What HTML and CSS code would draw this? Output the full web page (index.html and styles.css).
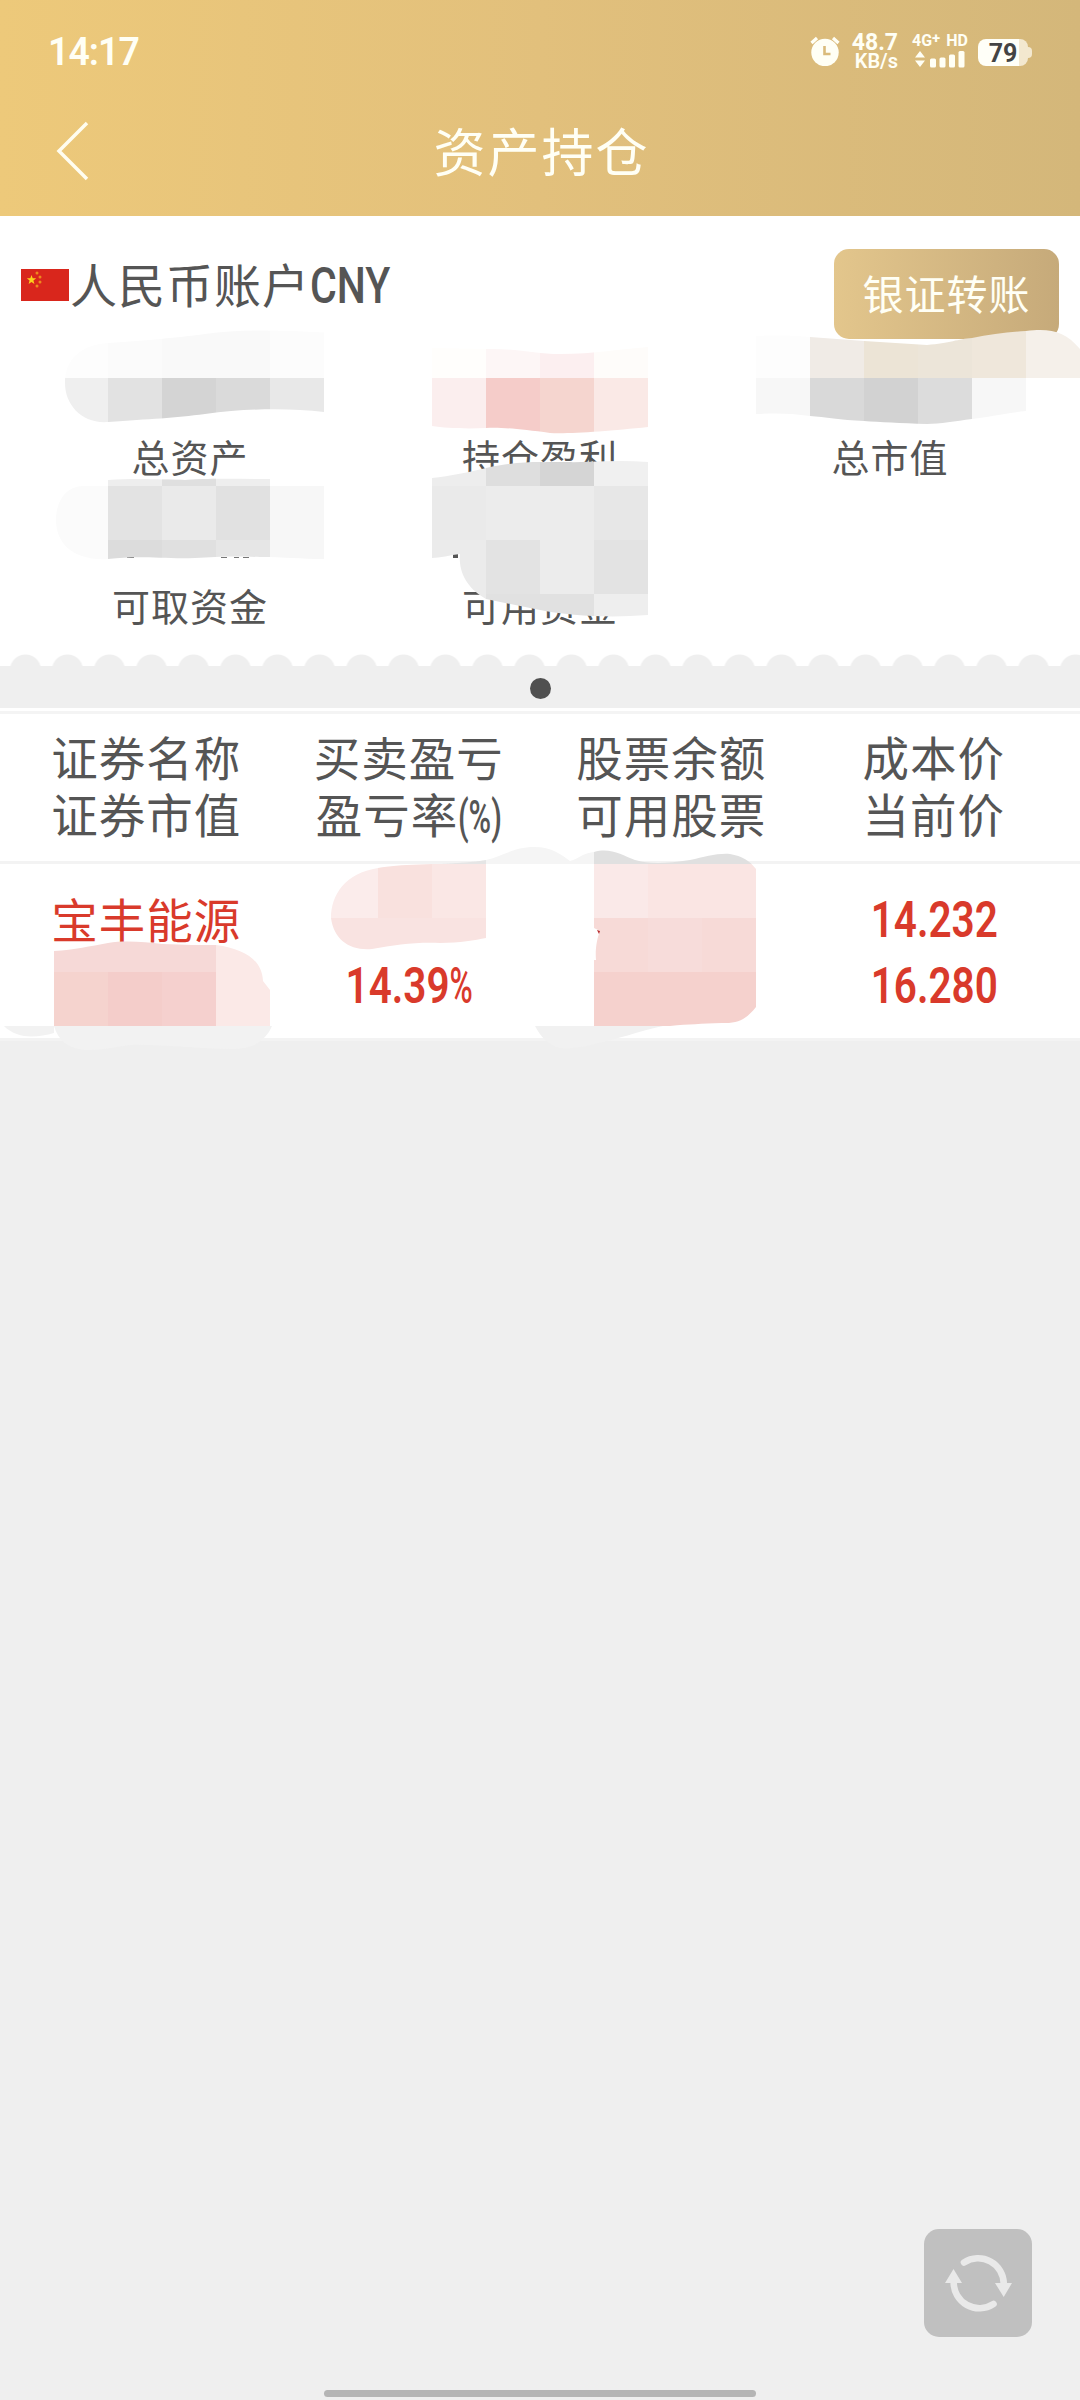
FILE: index.html
```html
<!DOCTYPE html>
<html lang="zh-CN">
<head>
    <meta charset="UTF-8">
    <title>资产持仓</title>
    <link rel="stylesheet" href="styles.css">
</head>

<body>
    <div class="header">
        <div class="status">
            <span class="time">14:17</span>
            <div class="status-right">
                <svg class="alarm" width="30" height="30" viewBox="0 0 30 30">
                    <path d="M1.500 7L7 2M28.500 7L23 2" stroke="#fffff5" stroke-width="3.200"/>
                    <circle cx="15" cy="16.500" r="13.700" fill="#fffff5"/>
                    <path d="M14.500 10v8h6" fill="none" stroke="#dabb7b" stroke-width="2.600"/>
                </svg>
                <div class="speed"><b>48.7</b><span>KB/s</span></div>
                <div class="network">
                    <div class="net-text"><span>4G<sup>+</sup></span><span>HD</span></div>
                    <svg width="54" height="17" viewBox="0 0 54 17">
                        <g fill="#fffff5">
                            <path d="M0 6.500L5 0l5 6.500zM0 9.500h10L5 16z"/>
                            <rect x="15" y="7.500" width="6" height="9" rx="1.500"/>
                            <rect x="24.500" y="6.500" width="6" height="10" rx="1.500"/>
                            <rect x="34" y="3.500" width="6" height="13" rx="1.500"/>
                            <rect x="43.500" y="0" width="6" height="16.500" rx="1.500"/>
                        </g>
                    </svg>
                </div>
                <div class="battery"><span>79</span></div>
            </div>
        </div>
        <div class="nav">
            <svg class="back" width="34" height="62" viewBox="0 0 34 62">
                <path d="M31 3L3 31l28 28" fill="none" stroke="#fffdf0" stroke-width="3.500"/>
            </svg>
            <h1>资产持仓</h1>
        </div>
    </div>

    <div class="account">
        <div class="account-top">
            <svg class="flag" width="48" height="32" viewBox="0 0 48 32">
                <rect width="48" height="32" fill="#d9261c"/>
                <path d="M10.500 6l1.200 3.300h3.500l-2.800 2.200 1 3.500-2.900-2.100-2.900 2.100 1-3.500-2.800-2.200h3.500z" fill="#fcd21c"/>
                <g fill="#ee8a1e">
                    <circle cx="16" cy="4" r="1.500"/><circle cx="19" cy="8" r="1.500"/>
                    <circle cx="19" cy="13" r="1.500"/><circle cx="16" cy="17" r="1.500"/>
                </g>
            </svg>
            <span class="account-name">人民币账户<span class="cny">CNY</span></span>
            <a href="javascript:;" class="transfer">银证转账</a>
        </div>
        <ul class="assets">
            <li>总资产</li>
            <li>持仓盈利</li>
            <li>总市值</li>
            <li>可取资金</li>
            <li>可用资金</li>
        </ul>
        <!-- 金额打码 -->
        <svg class="mask" width="1080" height="450" viewBox="0 216 1080 450">
            <clipPath id="m1"><path d="M65 383C65 360 80 345 108 343C150 340 175 338 205 334C240 329 280 330 324 332.500V412C290 408 250 408 205 414C175 418 150 419 108 422C82 424 65 405 65 383z"/></clipPath>
            <g clip-path="url(#m1)">
                <path fill="#fdfdfd" d="M54 324h54v54H54z"/>
                <path fill="#fbfbfb" d="M108 324h54v54h-54z"/>
                <path fill="#f9f9f9" d="M162 324h108v54H162z"/>
                <path fill="#fcfcfc" d="M270 324h54v54h-54z"/>
                <path fill="#efefef" d="M54 378h54v54H54z"/>
                <path fill="#e2e2e2" d="M108 378h54v54h-54z"/>
                <path fill="#d4d4d4" d="M162 378h54v54h-54z"/>
                <path fill="#dadada" d="M216 378h54v54h-54z"/>
                <path fill="#e8e8e8" d="M270 378h54v54h-54z"/>
            </g>

            <clipPath id="m2"><path d="M432 348L486 349C515 348 535 354 560 354C595 354 620 349 648 347V427C610 431 570 434 550 433C520 429 500 427 486 428C465 429 445 428 432 426z"/></clipPath>
            <g clip-path="url(#m2)">
                <path fill="#fffefc" d="M432 324h54v54h-54z"/>
                <path fill="#fdf6f6" d="M486 324h54v54h-54z"/>
                <path fill="#fceff0" d="M540 324h54v54h-54z"/>
                <path fill="#fefcfa" d="M594 324h54v54h-54z"/>
                <path fill="#fbeeee" d="M432 378h54v60h-54z"/>
                <path fill="#f5ccc9" d="M486 378h54v60h-54z"/>
                <path fill="#f5d5cf" d="M540 378h54v60h-54z"/>
                <path fill="#fae9e6" d="M594 378h54v60h-54z"/>
            </g>

            <clipPath id="m3"><path d="M756 336C780 335 800 336 810 337L864 341L927 345C950 343 958 339 972 338C990 334 1010 332 1026 331C1050 328 1065 331 1080 349V378H1026V411C1000 414 990 417 972 419C955 421 940 424 927 424C900 423 880 422 864 421C840 420 825 417 810 416C790 413 775 413 756 414z"/></clipPath>
            <g clip-path="url(#m3)">
                <path fill="#fdfdfd" d="M756 324h54v54h-54z"/>
                <path fill="#f0ebe6" d="M810 324h54v54h-54z"/>
                <path fill="#ece4d6" d="M864 324h54v54h-54z"/>
                <path fill="#ece5d9" d="M918 324h54v54h-54z"/>
                <path fill="#efe7db" d="M972 324h54v54h-54z"/>
                <path fill="#f5f0ea" d="M1026 324h54v54h-54z"/>
                <path fill="#f7f7f7" d="M756 378h54v54h-54zM972 378h54v54h-54z"/>
                <path fill="#d9d9d9" d="M810 378h54v54h-54z"/>
                <path fill="#d2d2d2" d="M864 378h54v54h-54z"/>
                <path fill="#dcdcdc" d="M918 378h54v54h-54z"/>
            </g>

            <path fill="#777" d="M127 557h7v1h-7zM221 557h6v1h-6zM234 557h5v1h-5zM243 557h6v1h-6z"/>
            <path fill="#555" d="M453 554h5v4h-5z"/>
            <clipPath id="m4"><path d="M108 480C140 478 165 480 185 480C205 478 240 479 270 479V486H324V559C300 559 285 557 260 557C230 556 215 557 195 558C160 559 140 555 108 559C75 561 56 545 56 520C56 502 65 487 82 486H108z"/></clipPath>
            <g clip-path="url(#m4)">
                <path fill="#eee" d="M108 470h162v16H108z"/>
                <path fill="#dfdfdf" d="M162 470h54v16h-54z"/>
                <path fill="#fbfbfb" d="M54 486h54v74H54z"/>
                <path fill="#e3e3e3" d="M108 486h54v54h-54z"/>
                <path fill="#eaeaea" d="M162 486h54v54h-54z"/>
                <path fill="#e1e1e1" d="M216 486h54v54h-54z"/>
                <path fill="#f7f7f7" d="M270 486h54v74h-54z"/>
                <path fill="#dcdcdc" d="M108 540h54v20h-54z"/>
                <path fill="#e0e0e0" d="M162 540h54v20h-54z"/>
                <path fill="#e6e6e6" d="M216 540h54v20h-54z"/>
            </g>

            <clipPath id="m5"><path d="M432 478C450 476 470 472 486 468C510 463 525 462 540 462C575 464 610 459 648 462V615C610 618 570 616 540 610L486 599C470 590 458 575 460 554C450 555 440 558 432 558z"/></clipPath>
            <g clip-path="url(#m5)">
                <path fill="#ededed" d="M432 450h54v36h-54z"/>
                <path fill="#dedede" d="M486 450h54v36h-54z"/>
                <path fill="#d5d5d5" d="M540 450h54v36h-54z"/>
                <path fill="#f0f0f0" d="M594 450h54v36h-54z"/>
                <path fill="#eaeaea" d="M432 486h54v54h-54z"/>
                <path fill="#ececec" d="M486 486h108v108H486z"/>
                <path fill="#e7e7e7" d="M594 486h54v54h-54z"/>
                <path fill="#ebebeb" d="M432 540h54v60h-54z"/>
                <path fill="#e3e3e3" d="M486 540h54v54h-54zM594 540h54v54h-54z"/>
                <path fill="#e1e1e1" d="M486 594h108v30H486z"/>
                <path fill="#eee" d="M594 594h54v30h-54z"/>
            </g>
        </svg>
    </div>

    <div class="scallop"></div>
    <div class="dian"><span></span></div>

    <div class="stocks">
        <div class="row thead">
            <div>证券名称<br>证券市值</div>
            <div>买卖盈亏<br>盈亏率<span class="unit">(%)</span></div>
            <div>股票余额<br>可用股票</div>
            <div>成本价<br>当前价</div>
        </div>
        <div class="row tbody">
            <div><p class="name">宝丰能源</p></div>
            <div><p></p><p class="num">14.39<i>%</i></p></div>
            <div></div>
            <div><p class="num">14.232</p><p class="num">16.280</p></div>
        </div>
        <!-- 持仓数据打码 -->
        <svg class="mask" width="1080" height="349" viewBox="0 711 1080 349">
            <path fill="#f2f2f2" d="M4 1026H54V1033C36 1038 17 1039 4 1026z"/>
            <path fill="#f2f2f2" d="M54 1026H272C266 1040 254 1049 232 1049C195 1049 160 1044 130 1045C110 1048 100 1050 86 1050C68 1049 58 1040 54 1026z"/>
            <clipPath id="t1"><path d="M54 951C75 950 90 946 108 943C125 940 145 942 162 944C185 945 200 945 216 945C245 949 262 960 263 981L270 990V1026H54z"/></clipPath>
            <g clip-path="url(#t1)">
                <path fill="#f6d9d7" d="M54 930h162v42H54z"/>
                <path fill="#fbe9e7" d="M216 930h54v96h-54z"/>
                <path fill="#f5d3ce" d="M54 972h54v54H54z"/>
                <path fill="#f4cdca" d="M108 972h54v54h-54z"/>
                <path fill="#f5d0ce" d="M162 972h54v54h-54z"/>
            </g>

            <path fill="#f5f5f5" d="M441 864C465 863 480 861 486 860C505 855 515 847 534 847C552 847 562 855 570 861C577 860 582 853 594 852V864z"/>
            <path fill="#e5e5e5" d="M441 864C465 863 480 861 486 860V864z"/>
            <clipPath id="t2"><path d="M331 918C331 895 345 873 378 868C400 864 430 864 486 863V938C475 940 460 943 440 943C415 942 395 945 372 949C350 951 334 940 331 918z"/></clipPath>
            <g clip-path="url(#t2)">
                <path fill="#fbeceb" d="M324 864h54v54h-54z"/>
                <path fill="#f9e1de" d="M378 864h54v54h-54z"/>
                <path fill="#fae7e5" d="M432 864h54v54h-54z"/>
                <path fill="#f9e3e1" d="M324 918h162v36H324z"/>
            </g>

            <path fill="#f1f1f1" d="M535 1026H663C640 1031 615 1040 594 1044C580 1048 567 1049 560 1048C548 1045 541 1037 535 1026z"/>
            <clipPath id="t3"><path d="M594 852C610 847 622 855 635 860C648 864 665 864 690 860C705 857 717 853 730 854C742 856 750 861 756 869V1007C748 1017 740 1024 722 1023C700 1024 690 1024 670 1026H594V960H596C595 950 597 938 600 931L594 928z"/></clipPath>
            <g clip-path="url(#t3)">
                <path fill="#e0e0e0" d="M594 840h162v24H594z"/>
                <path fill="#fae9e8" d="M594 864h54v54h-54z"/>
                <path fill="#fae5e3" d="M648 864h108v54H648z"/>
                <path fill="#f7dad7" d="M594 918h162v54H594z"/>
                <path fill="#f7dcda" d="M648 918h54v54h-54z"/>
                <path fill="#f5d1cd" d="M594 972h162v54H594z"/>
            </g>
            <path fill="#b8282a" d="M597 930l3 1-1 3z"/>
        </svg>
    </div>

    <a href="javascript:;" class="refresh">
        <svg width="108" height="108" viewBox="0 0 108 108">
            <g fill="none" stroke="#e9e9e9" stroke-width="6.600" stroke-linecap="round">
                <path d="M40 33.500A25.700 25.700 0 0 1 79.800 55"/>
                <path d="M69.500 75A25.700 25.700 0 0 1 29.700 53"/>
            </g>
            <path fill="#e9e9e9" d="M71 54h17l-8.300 14zM21 54h17l-8.500-14z"/>
        </svg>
    </a>
    <div class="home-bar"></div>
</body>

</html>
```
FILE: styles.css
```css
*{
    margin: 0;
    padding: 0;
    list-style: none;
    box-sizing: border-box;
}
body{
    width: 1080px;
    height: 2400px;
    overflow: hidden;
    background-color: #efefef;
    color: #555;
    font-family: "Noto Sans CJK SC", sans-serif;
}
a{text-decoration: none;}

.header{
    height: 216px;
    background: linear-gradient(to right, #edc97a, #e2c07c 50%, #d4b77a);
    color: #fffff5;
}
.status{
    display: flex;
    justify-content: space-between;
    height: 96px;
    padding: 0 48px;
    font-family: Roboto, sans-serif;
}
.time{
    padding-top: 30px;
    font-size: 39px;
    line-height: 44px;
    font-weight: 600;
    letter-spacing: -1px;
    transform: scaleX(.96);
    transform-origin: left;
}
.status-right{
    display: flex;
    padding-top: 33px;
}
.alarm{
    margin: 3px -1px 0 1px;
}
.speed{
    width: 48px;
    margin-left: 11px;
    text-align: right;
    font-size: 20px;
    font-weight: 600;
    line-height: 19px;
}
.speed b{
    display: block;
    font-size: 23px;
    font-weight: 700;
    line-height: 19px;
}
.network{
    width: 54px;
    margin-left: 14px;
}
.network svg{
    display: block;
    margin: 3px 0 0 3px;
}
.net-text{
    display: flex;
    justify-content: space-between;
    width: 56px;
    font-size: 16px;
    font-weight: 700;
    line-height: 15px;
}
.net-text sup{
    font-size: 15px;
    line-height: 0;
    vertical-align: 3px;
}
.battery{
    position: relative;
    width: 50px;
    height: 27px;
    margin: 6px 4px 0 12px;
    border-radius: 8px;
    background: linear-gradient(to right, #fffff8 41px, #f3e8cf 41px);
    color: #444;
    text-align: center;
    font-size: 25px;
    font-weight: 700;
    line-height: 29px;
}
.battery:after{
    content: "";
    position: absolute;
    right: -4px;
    top: 8px;
    width: 4px;
    height: 11px;
    border-radius: 0 4px 4px 0;
    background-color: #f3e8cf;
}
.nav{
    display: flex;
    align-items: center;
    height: 110px;
}
.back{margin: 0 0 0 56px;}
.nav h1{
    flex: 1;
    padding: 0 87px 2px 0;
    text-align: center;
    font-size: 52px;
    font-weight: 400;
    line-height: 80px;
    letter-spacing: 2px;
}

.account{
    position: relative;
    height: 438px;
    background-color: #fff;
}
.account-top{
    display: flex;
    height: 180px;
    padding: 33px 21px 0;
}
.flag{margin-top: 20px;}
.account-name{
    flex: 1;
    padding-left: 1px;
    font-size: 47px;
    line-height: 68px;
    letter-spacing: 1px;
}
.cny{
    display: inline-block;
    font-family: Roboto, sans-serif;
    font-size: 50px;
    font-weight: 500;
    letter-spacing: 0;
    line-height: 60px;
    transform: scaleX(.82);
    transform-origin: left;
}
.transfer{
    width: 225px;
    height: 90px;
    border-radius: 15px;
    background: linear-gradient(to right, #e3c68c, #c6aa7a);
    color: #fffff5;
    text-align: center;
    font-size: 41px;
    line-height: 87px;
    letter-spacing: 1px;
}
.assets{
    display: grid;
    grid-template-columns: repeat(3, 1fr);
    grid-auto-rows: 149px;
    padding: 0 15px;
    text-align: center;
    font-size: 38px;
    letter-spacing: 1px;
}
.assets li{
    padding-top: 32px;
    line-height: 56px;
}
.mask{
    position: absolute;
    left: 0;
    top: 0;
}

.scallop{
    height: 12px;
    background: #fff radial-gradient(circle at 21px 16px, #efefef 15px, transparent 16px) 4.5px 0 / 42px 12px repeat-x;
}
.dian{
    height: 42px;
    padding-top: 12px;
}
.dian span{
    display: block;
    width: 21px;
    height: 21px;
    margin: 0 auto;
    border-radius: 50%;
    background-color: #505050;
}

.stocks{
    position: relative;
    border-top: 3px solid #fff;
    border-bottom: 3px solid #f3f3f3;
    background-color: #fff;
}
.row{
    display: grid;
    grid-template-columns: repeat(4, 1fr);
    padding: 0 15px;
    text-align: center;
}
.thead{
    height: 153px;
    padding-top: 13px;
    border-top: 3px solid #f4f4f4;
    border-bottom: 3px solid #f3f3f3;
    font-size: 46.5px;
    line-height: 57px;
    letter-spacing: 1px;
}
.unit{
    display: inline-block;
    margin-right: -23px;
    font-family: Roboto, sans-serif;
    font-weight: 500;
    line-height: 50px;
    letter-spacing: 0;
    transform: scaleX(.66);
    transform-origin: left;
}
.tbody{
    height: 174px;
    padding-top: 23px;
    color: #d93a2b;
    font-size: 46.5px;
    line-height: 66px;
    letter-spacing: 1px;
}
.tbody p{height: 66px;}
.tbody .name{line-height: 61px;}
.num{
    font-family: Roboto, sans-serif;
    font-size: 50px;
    font-weight: 600;
    letter-spacing: 0;
    transform: scaleX(.81);
}
.num i{
    display: inline-block;
    margin-right: -8px;
    font-style: normal;
    font-weight: 500;
    transform: scaleX(.78);
    transform-origin: left;
}

.refresh{
    position: absolute;
    left: 924px;
    top: 2229px;
    height: 108px;
    border-radius: 15px;
    background-color: #c0c0c0;
}
.home-bar{
    position: absolute;
    left: 324px;
    top: 2390px;
    width: 432px;
    height: 7px;
    border-radius: 4px;
    background-color: #b5b5b5;
}
```
